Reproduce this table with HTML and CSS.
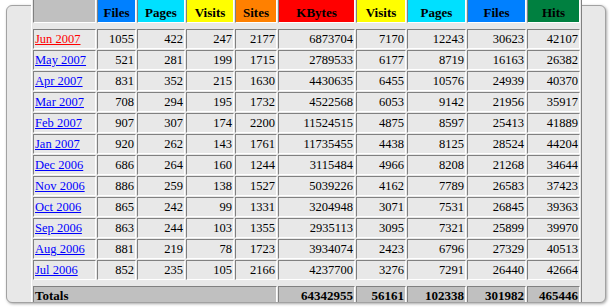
FILE: index.html
```html
<!DOCTYPE html>
<html>
<head>
<meta charset="utf-8">
<link rel="stylesheet" href="styles.css">
</head>
<body>
<div class="panel">
  <div class="clip">
    <table class="stats">
      <tr class="head">
        <th class="w-month h-gray"></th>
        <th class="w-files h-blue">Files</th>
        <th class="w-pages h-cyan">Pages</th>
        <th class="w-visits h-yellow">Visits</th>
        <th class="w-sites h-orange">Sites</th>
        <th class="w-kbytes h-red">KBytes</th>
        <th class="w-visits2 h-yellow">Visits</th>
        <th class="w-pages2 h-cyan">Pages</th>
        <th class="w-files2 h-blue">Files</th>
        <th class="w-hits h-green">Hits</th>
      </tr>
      <tr class="sep"><td colspan="10"></td></tr>
      <tr><td class="m"><a class="cur" href="#">Jun 2007</a></td><td>1055</td><td>422</td><td>247</td><td>2177</td><td>6873704</td><td>7170</td><td>12243</td><td>30623</td><td>42107</td></tr>
      <tr><td class="m"><a href="#">May 2007</a></td><td>521</td><td>281</td><td>199</td><td>1715</td><td>2789533</td><td>6177</td><td>8719</td><td>16163</td><td>26382</td></tr>
      <tr><td class="m"><a href="#">Apr 2007</a></td><td>831</td><td>352</td><td>215</td><td>1630</td><td>4430635</td><td>6455</td><td>10576</td><td>24939</td><td>40370</td></tr>
      <tr><td class="m"><a href="#">Mar 2007</a></td><td>708</td><td>294</td><td>195</td><td>1732</td><td>4522568</td><td>6053</td><td>9142</td><td>21956</td><td>35917</td></tr>
      <tr><td class="m"><a href="#">Feb 2007</a></td><td>907</td><td>307</td><td>174</td><td>2200</td><td>11524515</td><td>4875</td><td>8597</td><td>25413</td><td>41889</td></tr>
      <tr><td class="m"><a href="#">Jan 2007</a></td><td>920</td><td>262</td><td>143</td><td>1761</td><td>11735455</td><td>4438</td><td>8125</td><td>28524</td><td>44204</td></tr>
      <tr><td class="m"><a href="#">Dec 2006</a></td><td>686</td><td>264</td><td>160</td><td>1244</td><td>3115484</td><td>4966</td><td>8208</td><td>21268</td><td>34644</td></tr>
      <tr><td class="m"><a href="#">Nov 2006</a></td><td>886</td><td>259</td><td>138</td><td>1527</td><td>5039226</td><td>4162</td><td>7789</td><td>26583</td><td>37423</td></tr>
      <tr><td class="m"><a href="#">Oct 2006</a></td><td>865</td><td>242</td><td>99</td><td>1331</td><td>3204948</td><td>3071</td><td>7531</td><td>26845</td><td>39363</td></tr>
      <tr><td class="m"><a href="#">Sep 2006</a></td><td>863</td><td>244</td><td>103</td><td>1355</td><td>2935113</td><td>3095</td><td>7321</td><td>25899</td><td>39970</td></tr>
      <tr><td class="m"><a href="#">Aug 2006</a></td><td>881</td><td>219</td><td>78</td><td>1723</td><td>3934074</td><td>2423</td><td>6796</td><td>27329</td><td>40513</td></tr>
      <tr><td class="m"><a href="#">Jul 2006</a></td><td>852</td><td>235</td><td>105</td><td>2166</td><td>4237700</td><td>3276</td><td>7291</td><td>26440</td><td>42664</td></tr>
      <tr class="sep"><td colspan="10"></td></tr>
      <tr class="totals"><td class="m" colspan="5">Totals</td><td>64342955</td><td>56161</td><td>102338</td><td>301982</td><td>465446</td></tr>
    </table>
  </div>
</div>
</body>
</html>
```

FILE: styles.css
```css
html, body {
  margin: 0;
  padding: 0;
  background: #ffffff;
}
body {
  width: 611px;
  height: 308px;
  overflow: hidden;
  font-family: "Liberation Serif", "Times New Roman", serif;
  font-size: 13px;
  color: #000;
}
.panel {
  box-sizing: border-box;
  margin: 5px 0 0 6px;
  width: 600px;
  height: 298px;
  border: 1px solid #a2a2a2;
  border-radius: 6px;
  background: #e8e8e8;
  box-shadow: 1px 1px 3px rgba(0, 0, 0, 0.35);
  padding-left: 24px;
}
.clip {
  margin-top: -6px;
  height: 302px;
  overflow: hidden;
}
.stats {
  margin-top: -3px;
  table-layout: fixed;
  width: 551px;
  border-collapse: separate;
  border-spacing: 1px;
  border: 1px solid;
  border-color: #ffffff #808080 #808080 #ffffff;
  background: #e8e8e8;
}
.stats th,
.stats td {
  box-sizing: border-box;
  border: 1px solid;
  border-color: #808080 #ffffff #ffffff #808080;
  padding: 1px;
  line-height: 16px;
  white-space: nowrap;
  overflow: hidden;
}
.stats td {
  text-align: right;
  height: 20px;
  font-size: 12.5px;
}
.stats td.m {
  text-align: left;
}
.head th {
  height: 24px;
  padding: 3px 1px 0;
  line-height: 18px;
  font-size: 13px;
  font-weight: bold;
  text-align: center;
  vertical-align: middle;
}
.w-month { width: 63px; }
.w-files { width: 39px; }
.w-pages { width: 48px; }
.w-visits { width: 48px; }
.w-sites { width: 42px; }
.w-kbytes { width: 77px; }
.w-visits2 { width: 50px; }
.w-pages2 { width: 59px; }
.w-files2 { width: 59px; }
.w-hits { width: 53px; }
.h-gray { background: #c0c0c0; }
.h-blue { background: #0080ff; }
.h-cyan { background: #00e0ff; }
.h-yellow { background: #ffff00; }
.h-orange { background: #ff8000; }
.h-red { background: #ff0000; }
.h-green { background: #008040; }
.stats tr.sep td {
  height: 4px;
  padding: 0;
  border: 0;
  line-height: 0;
}
.stats a {
  color: #0000ff;
  text-decoration: underline;
}
.stats a.cur {
  color: #ff0000;
}
.stats tr.totals td {
  background: #c0c0c0;
  font-weight: bold;
  font-size: 13px;
}
```
